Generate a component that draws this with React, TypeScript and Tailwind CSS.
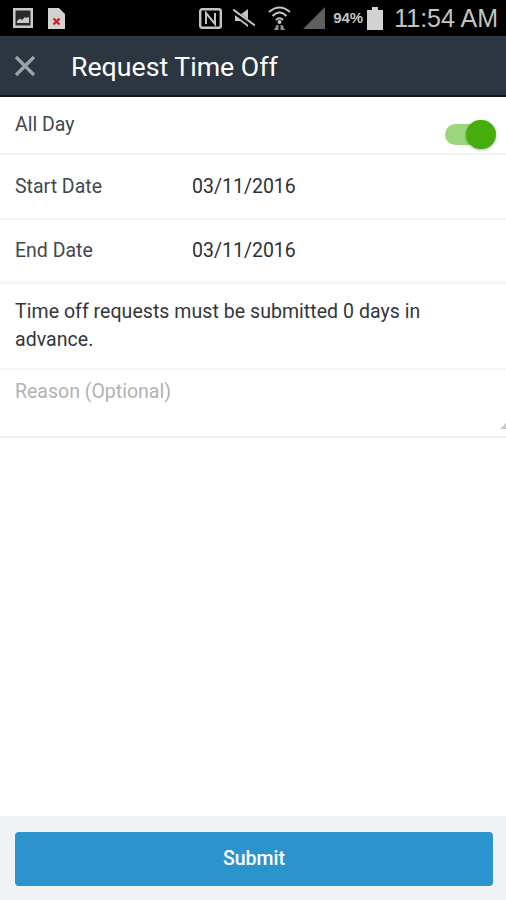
const fontRoboto = { fontFamily: "Roboto, sans-serif" };
const fontStatus = { fontFamily: "'Liberation Sans', sans-serif" };

function StatusBar() {
  return (
    <div className="flex h-[36px] items-center bg-black pl-[13px] pr-[8px] text-[#c4c4c4]">
      {/* gallery notification */}
      <svg width="20" height="20" viewBox="0 0 20 20" className="shrink-0">
        <rect x="0" y="0" width="20" height="20" fill="#c9c9c9" />
        <rect x="2.5" y="2.5" width="15" height="15" fill="#2a2a2a" />
        <path d="M4 15 L4 13 L7 10.5 L9 12 L12 9 L13 10 L16 9 L16 15 Z" fill="#c9c9c9" />
      </svg>
      {/* file error notification */}
      <svg width="17" height="21" viewBox="0 0 17 21" className="ml-[15px] shrink-0">
        <path d="M0 0 H11 L17 6 V21 H0 Z" fill="#d2d2d2" />
        <path d="M5.5 10.5 L11.5 16.5 M11.5 10.5 L5.5 16.5" stroke="#c4202c" strokeWidth="2.2" />
      </svg>
      <div className="flex-1" />
      {/* NFC */}
      <svg width="23" height="21" viewBox="0 0 23 21" className="shrink-0">
        <rect x="1.2" y="1.2" width="20.6" height="18.6" rx="2" fill="none" stroke="#c4c4c4" strokeWidth="2.4" />
        <path d="M7 16 V5 L16 16 V5" fill="none" stroke="#c4c4c4" strokeWidth="2" />
      </svg>
      {/* muted speaker */}
      <svg width="22" height="18" viewBox="0 0 22 18" className="ml-[11px] shrink-0">
        <path d="M2 6 H7 L15 0 V18 L7 12 H2 Z" fill="#c4c4c4" />
        <path d="M0 2 L22 18" stroke="#000" strokeWidth="4.5" />
        <path d="M0 0.5 L22 16.5" stroke="#c4c4c4" strokeWidth="2" />
      </svg>
      {/* wifi */}
      <svg width="23" height="26" viewBox="0 0 23 26" className="ml-[13px] shrink-0">
        <path d="M1 7 Q11.5 -2 22 7 M4.5 11 Q11.5 4 18.5 11 M8 15 Q11.5 11.5 15 15" fill="none" stroke="#c4c4c4" strokeWidth="2" />
        <circle cx="11.5" cy="17" r="2" fill="#c4c4c4" />
        <path d="M6 25 L8.5 20 H10.5 V25 Z M17 25 L14.5 20 H12.5 V25 Z" fill="#8f8f8f" />
      </svg>
      {/* signal */}
      <svg width="22" height="22" viewBox="0 0 22 22" className="ml-[12px] shrink-0">
        <path d="M0 22 L22 0 V22 Z" fill="#5e5e5e" />
      </svg>
      <span className="ml-[8px] text-[15px] font-bold" style={fontStatus}>94%</span>
      {/* battery */}
      <svg width="16" height="23" viewBox="0 0 16 23" className="ml-[4px] shrink-0">
        <rect x="5" y="0" width="6" height="3" fill="#d2d2d2" />
        <rect x="0" y="3" width="16" height="20" fill="#d2d2d2" />
      </svg>
      <span className="ml-[11px] text-[25px] leading-none" style={fontStatus}>11:54 AM</span>
    </div>
  );
}

export default function App() {
  return (
    <div className="flex h-[900px] w-[506px] flex-col overflow-hidden bg-white" style={fontRoboto}>
      <StatusBar />
      <header className="flex h-[61px] items-center border-b-[2px] border-[#11161b] bg-[#2c3640] pl-[14px]">
        <svg width="22" height="22" viewBox="0 0 22 22" className="shrink-0">
          <path d="M2 2 L20 20 M20 2 L2 20" stroke="#9da3a8" strokeWidth="3.2" />
        </svg>
        <h1 className="ml-[35px] pt-[3px] text-[26.7px] leading-none text-white">Request Time Off</h1>
      </header>

      <div className="relative h-[58px] border-b-2 border-[#f2f3f4] pl-[15px] pt-[16px] text-[19.5px] leading-[24px] text-[#44474a]">
        All Day
        {/* switch */}
        <div className="absolute left-[445px] top-[27px] h-[21px] w-[40px] rounded-full bg-[#9bd67e]" />
        <div className="absolute left-[466px] top-[23px] h-[29px] w-[30px] rounded-full bg-[#45ae0c] shadow-[0_1px_3px_rgba(0,0,0,0.3)]" />
      </div>

      <div className="flex h-[65px] items-center border-b-2 border-[#f2f3f4] pl-[15px] text-[19.5px] text-[#44474a]">
        <span className="w-[177px]">Start Date</span>
        <span className="text-[#2e3033]">03/11/2016</span>
      </div>
      <div className="flex h-[65px] items-center border-b-4 border-[#f5f6f7] pl-[15px] text-[19.5px] text-[#44474a]">
        <span className="w-[177px]">End Date</span>
        <span className="text-[#2e3033]">03/11/2016</span>
      </div>

      <p className="h-[85px] border-b-2 border-[#f5f6f7] pl-[15px] pr-[60px] pt-[13px] text-[19.5px] leading-[28px] tracking-[0.05px] text-[#33363a]">
        Time off requests must be submitted 0 days in advance.
      </p>

      <div className="relative h-[68px] border-b-2 border-[#eeeff0] pl-[15px] pt-[10px] text-[19.5px] leading-[24px] text-[#b0b2b4]">
        Reason (Optional)
        <svg width="6" height="6" viewBox="0 0 6 6" className="absolute bottom-[7px] right-0">
          <path d="M0 6 L6 0 V6 Z" fill="#c8c8c8" />
        </svg>
      </div>

      <div className="flex-1" />

      <footer className="flex h-[84px] items-start bg-[#f1f2f4] pl-[15px] pr-[13px] pt-[16px]">
        <button className="h-[54px] w-full rounded-[4px] bg-[#2b94cd] text-[19.5px] font-medium text-white">
          Submit
        </button>
      </footer>
    </div>
  );
}
